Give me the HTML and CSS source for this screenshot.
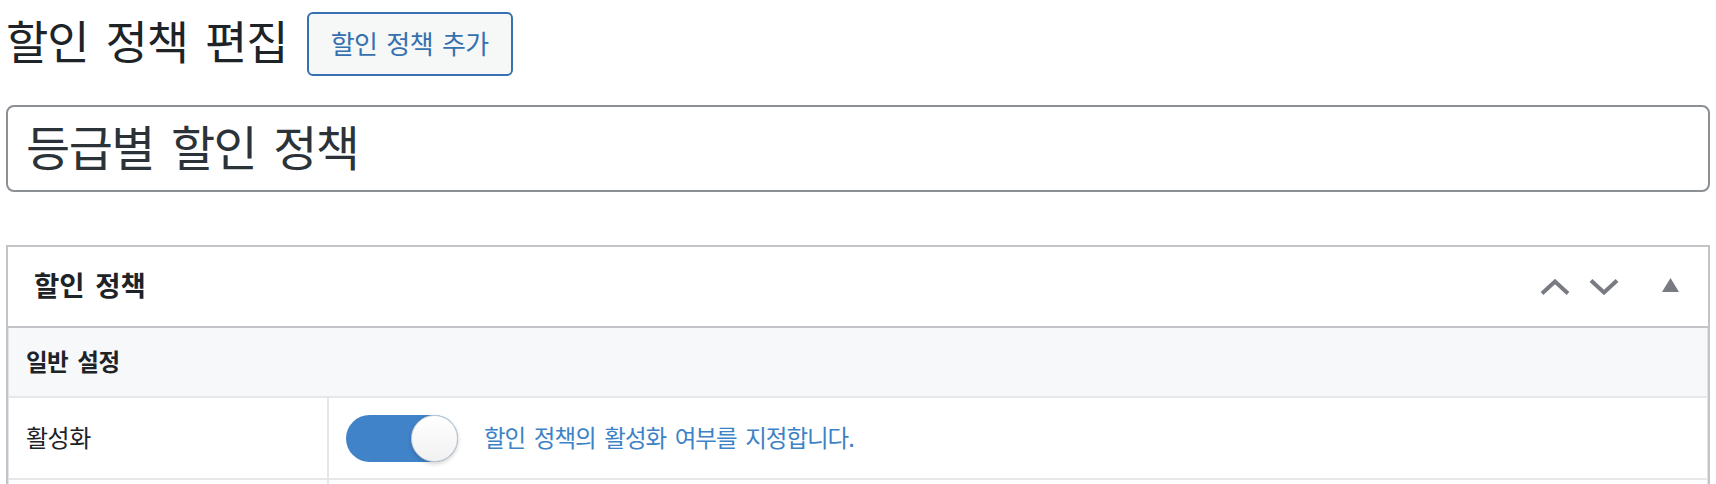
FILE: index.html
```html
<!DOCTYPE html>
<html lang="ko">
<head>
<meta charset="utf-8">
<title>할인 정책 편집</title>
<link rel="stylesheet" href="styles.css">
</head>
<body>
<div class="wrap">
  <div class="title-row">
    <h1 class="page-title">할인 정책 편집</h1>
    <a class="title-action" href="#">할인 정책 추가</a>
  </div>

  <input class="title-input" type="text" value="등급별 할인 정책">

  <div class="postbox">
    <div class="postbox-header">
      <h2 class="postbox-title">할인 정책</h2>
      <div class="handle-actions">
        <svg class="icon-chevron" width="30" height="16" viewBox="0 0 30 16"><polyline points="2,14.5 15,2.5 28,14.5" fill="none" stroke="#787c82" stroke-width="4"/></svg>
        <svg class="icon-chevron down" width="30" height="16" viewBox="0 0 30 16"><polyline points="2,1.5 15,13.5 28,1.5" fill="none" stroke="#787c82" stroke-width="4"/></svg>
        <svg class="icon-tri" width="17" height="14" viewBox="0 0 17 14"><polygon points="8.5,0 17,14 0,14" fill="#787c82"/></svg>
      </div>
    </div>
    <div class="inside">
      <div class="section-head">일반 설정</div>
      <div class="row">
        <div class="row-label">활성화</div>
        <div class="row-field">
          <span class="toggle"><span class="knob"></span></span>
          <span class="desc">할인 정책의 활성화 여부를 지정합니다.</span>
        </div>
      </div>
      <div class="row">
        <div class="row-label"></div>
        <div class="row-field"></div>
      </div>
    </div>
  </div>
</div>
</body>
</html>
```

FILE: styles.css
```css
* { box-sizing: border-box; }

html, body {
  margin: 0;
  padding: 0;
  background: #ffffff;
}

body {
  font-family: "Noto Sans CJK KR", "Noto Sans", sans-serif;
  color: #1d2327;
  overflow: hidden;
}

.wrap {
  padding: 12px 6px 0 6px;
}

.title-row {
  display: flex;
  align-items: flex-start;
  gap: 19px;
  height: 64px;
}

.page-title {
  margin: 0;
  font-size: 46px;
  font-weight: 400;
  line-height: 54px;
  letter-spacing: -1px;
  word-spacing: 5px;
  color: #1d2327;
}

.title-action {
  display: flex;
  align-items: center;
  justify-content: center;
  width: 206px;
  height: 64px;
  padding-bottom: 3px;
  border: 2px solid #3570b0;
  border-radius: 6px;
  background: #f6f7f7;
  color: #3570b0;
  font-size: 26px;
  letter-spacing: -0.5px;
  word-spacing: 2px;
  text-decoration: none;
}

.title-input {
  display: block;
  width: 100%;
  height: 87px;
  margin: 29px 0 0 0;
  padding: 0 15px 8px 18px;
  border: 2px solid #8c8f94;
  border-radius: 8px;
  background: #ffffff;
  color: #2c3338;
  font-family: "Noto Sans CJK KR", "Noto Sans", sans-serif;
  font-size: 48px;
  letter-spacing: -1.5px;
  word-spacing: 5px;
  outline: none;
}

.postbox {
  margin-top: 53px;
  border: 2px solid #c3c4c7;
  border-bottom: none;
  background: #ffffff;
}

.postbox-header {
  display: flex;
  align-items: center;
  justify-content: space-between;
  height: 81px;
  padding: 0 29px 4px 26px;
  border-bottom: 2px solid #c3c4c7;
}

.postbox-title {
  margin: 0;
  font-size: 27.5px;
  font-weight: 700;
  line-height: 1.3;
  word-spacing: 3px;
  color: #1d2327;
}

.handle-actions {
  display: flex;
  align-items: center;
  padding-top: 4px;
}

.icon-chevron { display: block; }
.icon-chevron.down { margin-left: 19px; }
.icon-tri { display: block; margin-left: 43px; margin-top: -3px; }

.inside {
  border-left: 1px solid #e2e4e7;
  border-right: 1px solid #e2e4e7;
}

.section-head {
  display: flex;
  align-items: center;
  height: 70px;
  padding: 0 0 3px 17px;
  background: #f7f8f9;
  border-bottom: 2px solid #e6e7e8;
  font-size: 23.5px;
  font-weight: 700;
  letter-spacing: -0.5px;
  word-spacing: 3px;
  color: #1d2327;
}

.row {
  display: grid;
  grid-template-columns: 320px 1fr;
  height: 82px;
  border-bottom: 2px solid #e6e7e8;
}

.row-label {
  display: flex;
  align-items: center;
  padding: 0 0 3px 17px;
  border-right: 2px solid #e6e7e8;
  font-size: 24px;
  letter-spacing: -0.5px;
  color: #1d2327;
}

.row-field {
  display: flex;
  align-items: center;
  gap: 26px;
  padding-left: 17px;
}

.toggle {
  position: relative;
  display: block;
  width: 112px;
  height: 47px;
  border-radius: 24px;
  background: #4183c9;
}

.knob {
  position: absolute;
  top: 0;
  right: 0;
  width: 47px;
  height: 47px;
  border-radius: 50%;
  border: 1px solid #cfd0d2;
  background: linear-gradient(#ffffff, #f1f1f1);
  box-shadow: 0 2px 4px rgba(0, 0, 0, 0.18);
}

.desc {
  padding-bottom: 2px;
  font-size: 23.5px;
  letter-spacing: -1px;
  word-spacing: 3px;
  color: #3d82c6;
}
```
